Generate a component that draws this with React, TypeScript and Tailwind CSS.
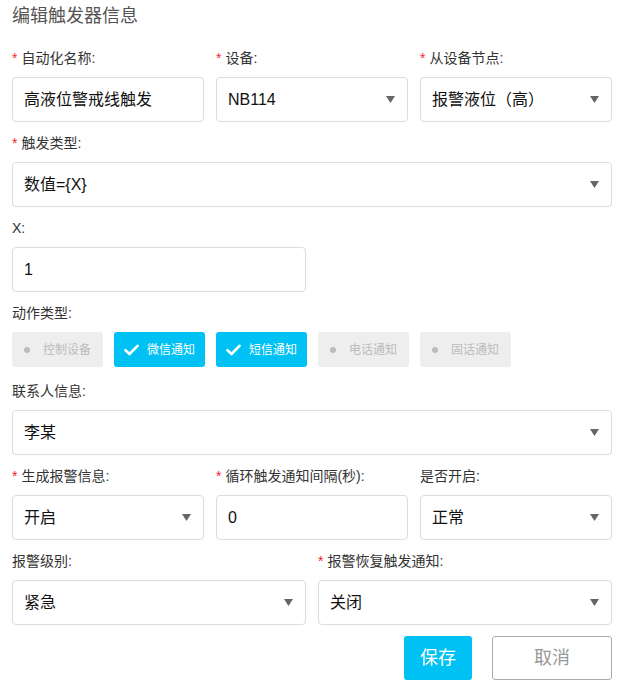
import React from "react";

const FONT = { fontFamily: '"Liberation Sans", "Noto Sans CJK SC", sans-serif' };

function Label({ text, required }: { text: string; required?: boolean }) {
  return (
    <div className="h-[20px] leading-[20px] text-[14px] text-[#333] mb-[9px] whitespace-nowrap">
      {required && <span className="text-[#f5222d] mr-[4px]">*</span>}
      {text}
    </div>
  );
}

function Arrow() {
  return (
    <svg width="9" height="7" viewBox="0 0 9 7" className="shrink-0">
      <path d="M0 0 H9 L4.5 7 Z" fill="#666" />
    </svg>
  );
}

function Box({ value, select }: { value: string; select?: boolean }) {
  return (
    <div className="h-[45px] border border-[#dcdcdc] rounded-[4px] bg-white flex items-center pl-[11px] pr-[12px] text-[16px] text-[#111]">
      <span className="flex-1 truncate">{value}</span>
      {select && <Arrow />}
    </div>
  );
}

function Field({ label, required, value, select, className }: { label: string; required?: boolean; value: string; select?: boolean; className?: string }) {
  return (
    <div className={className}>
      <Label text={label} required={required} />
      <Box value={value} select={select} />
    </div>
  );
}

function Toggle({ text, on }: { text: string; on?: boolean }) {
  return on ? (
    <div className="w-[91px] h-[35px] rounded-[3px] bg-[#00c1f3] flex items-center justify-center gap-[8px] text-[12px] text-white">
      <svg width="15" height="12" viewBox="0 0 15 12">
        <path d="M1.5 6.2 L5.5 10 L13.5 1.8" stroke="#fff" strokeWidth="2.6" fill="none" strokeLinecap="round" strokeLinejoin="round" />
      </svg>
      <span>{text}</span>
    </div>
  ) : (
    <div className="w-[91px] h-[35px] rounded-[3px] bg-[#eeeeee] flex items-center justify-center gap-[13px] text-[12px] text-[#bbb]">
      <span className="w-[6px] h-[6px] rounded-full bg-[#bbb]" />
      <span>{text}</span>
    </div>
  );
}

export default function App() {
  return (
    <div className="w-[620px] h-[683px] bg-white overflow-hidden pl-[12px] pr-[8px]" style={FONT}>
      <div className="h-[32px] leading-[32px] text-[18px] text-[#555]">编辑触发器信息</div>
      <div className="mt-[16px] grid grid-cols-3 gap-x-[12px]">
        <Field label="自动化名称:" required value="高液位警戒线触发" />
        <Field label="设备:" required value="NB114" select />
        <Field label="从设备节点:" required value="报警液位（高）" select />
      </div>
      <Field className="mt-[11px]" label="触发类型:" required value="数值={X}" select />
      <div className="mt-[11px] grid grid-cols-2 gap-x-[12px]">
        <Field label="X:" value="1" />
      </div>
      <div className="mt-[11px]">
        <Label text="动作类型:" />
        <div className="flex gap-[11px]">
          <Toggle text="控制设备" />
          <Toggle text="微信通知" on />
          <Toggle text="短信通知" on />
          <Toggle text="电话通知" />
          <Toggle text="固话通知" />
        </div>
      </div>
      <Field className="mt-[14px]" label="联系人信息:" value="李某" select />
      <div className="mt-[11px] grid grid-cols-3 gap-x-[12px]">
        <Field label="生成报警信息:" required value="开启" select />
        <Field label="循环触发通知间隔(秒):" required value="0" />
        <Field label="是否开启:" value="正常" select />
      </div>
      <div className="mt-[11px] grid grid-cols-2 gap-x-[12px]">
        <Field label="报警级别:" value="紧急" select />
        <Field label="报警恢复触发通知:" required value="关闭" select />
      </div>
      <div className="mt-[11px] flex justify-end gap-[20px]">
        <div className="w-[68px] h-[44px] rounded-[3px] bg-[#00c1f3] text-white text-[18px] flex items-center justify-center">保存</div>
        <div className="w-[120px] h-[44px] rounded-[3px] border border-[#aaa] text-[#999] text-[18px] flex items-center justify-center">取消</div>
      </div>
    </div>
  );
}
